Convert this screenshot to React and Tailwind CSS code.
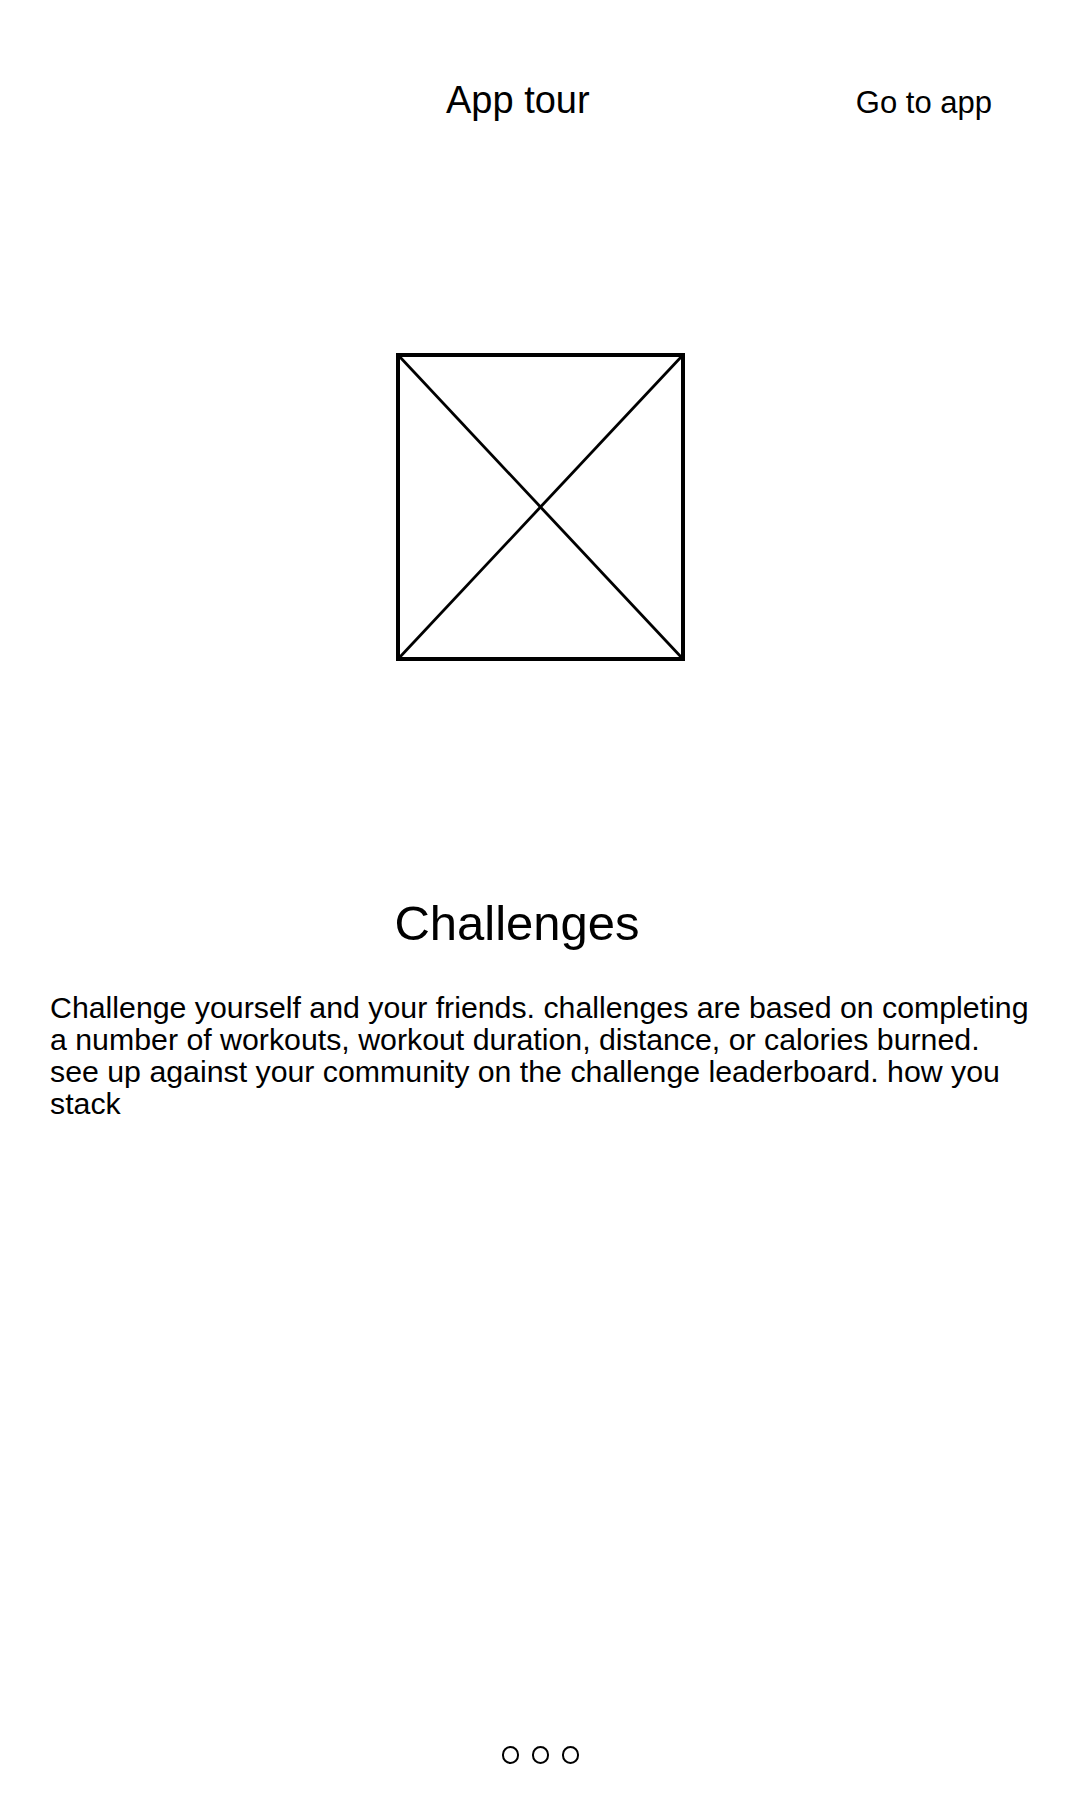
import React from 'react';

const TourImage = () => (
  <svg width="289" height="308" viewBox="0 0 289 308" fill="none" stroke="#000">
    <rect x="2" y="2" width="285" height="304" strokeWidth="4" />
    <line x1="3" y1="3" x2="286" y2="305" strokeWidth="2.8" />
    <line x1="286" y1="3" x2="3" y2="305" strokeWidth="2.8" />
  </svg>
);

const Dots = ({ count = 3 }) => (
  <div className="flex justify-center gap-[13px]">
    {Array.from({ length: count }).map((_, i) => (
      <span key={i} className="block w-[17px] h-[18px] rounded-full border-[2.5px] border-black" />
    ))}
  </div>
);

export default function App() {
  return (
    <div
      className="w-[1080px] h-[1800px] bg-white text-black overflow-hidden"
      style={{ fontFamily: '"Liberation Sans", Arial, sans-serif' }}
    >
      {/* header */}
      <div className="flex items-start pt-[81px] pl-[446px] pr-[88px]">
        <h1 className="text-[38px] leading-none">App tour</h1>
        <button className="ml-auto mt-[6px] text-[31px] leading-none">Go to app</button>
      </div>

      <div className="mt-[234px] ml-[396px]">
        <TourImage />
      </div>

      <h2 className="mt-[238px] pr-[46px] text-center text-[49px] leading-none">Challenges</h2>

      <p className="mt-[44px] pl-[50px] pr-[47px] text-[30.3px] leading-[32px]">
        Challenge yourself and your friends. challenges are based on completing a number of workouts,
        workout duration, distance, or calories burned. see up against your community on the challenge
        leaderboard. how you stack
      </p>

      <div className="mt-[626px]">
        <Dots />
      </div>
    </div>
  );
}
